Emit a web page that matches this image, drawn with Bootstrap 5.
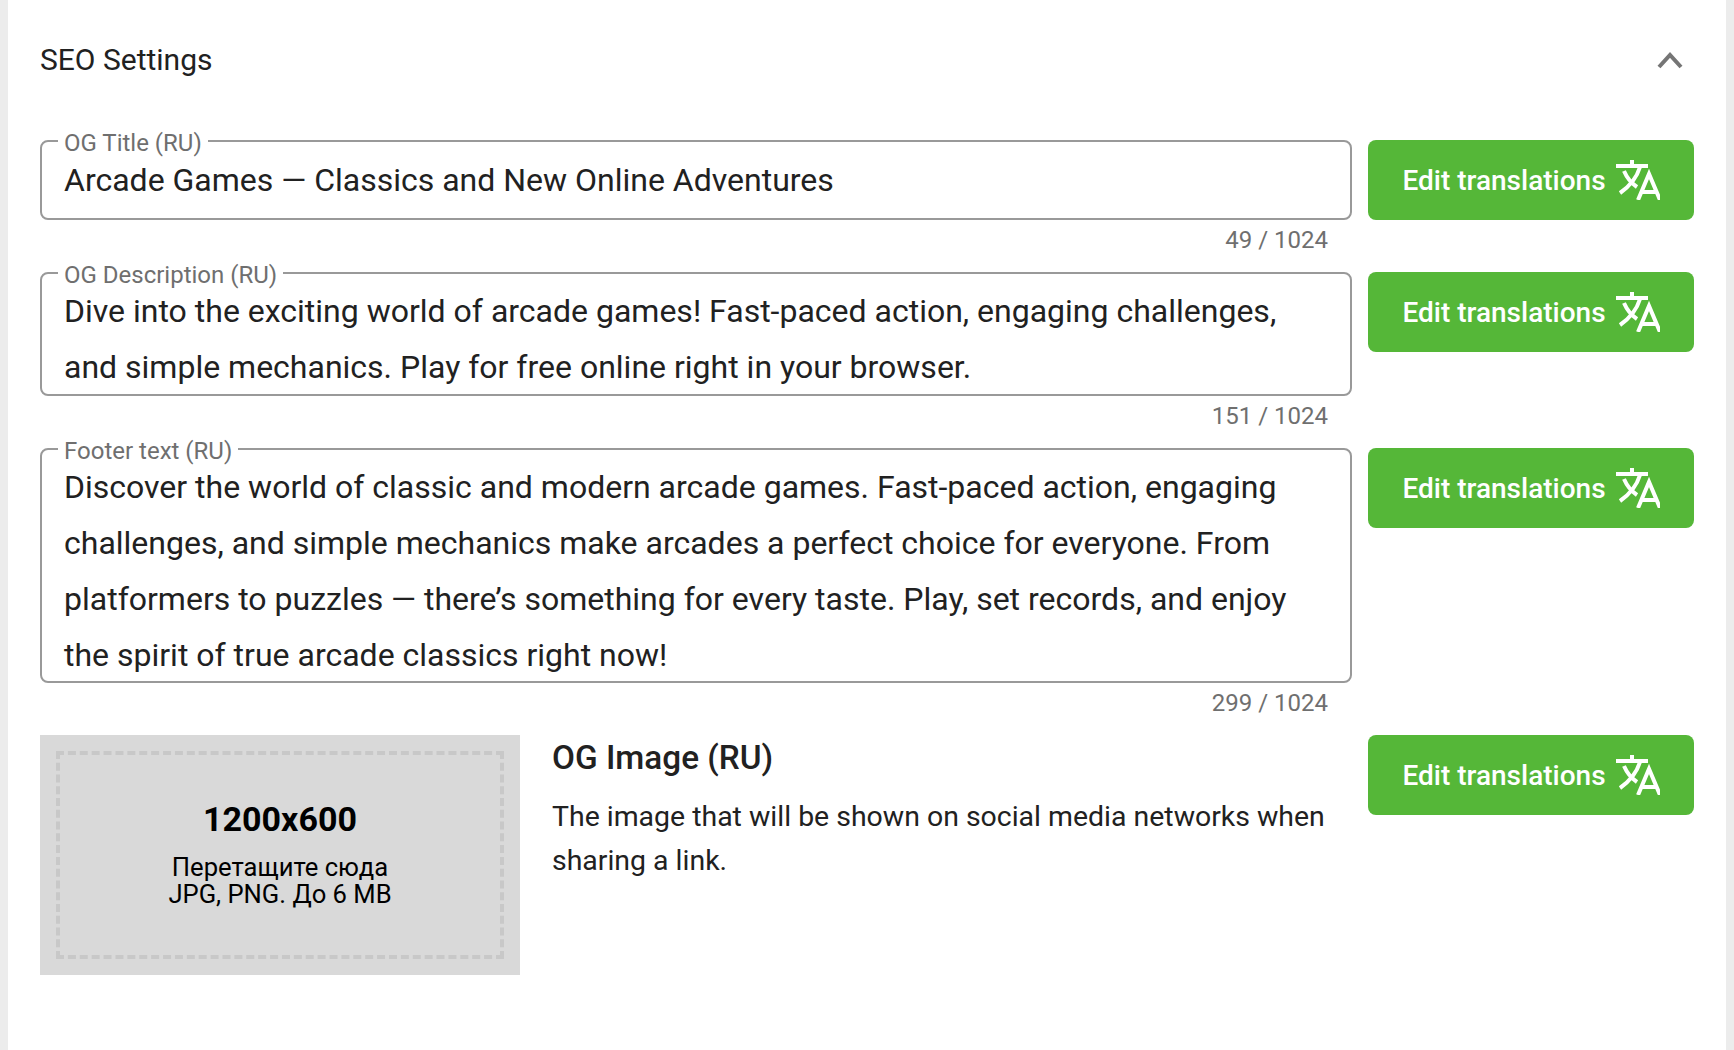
<!DOCTYPE html>
<html lang="en">
<head>
<meta charset="utf-8">
<title>SEO Settings</title>
<link href="https://cdn.jsdelivr.net/npm/bootstrap@5.3.0/dist/css/bootstrap.min.css" rel="stylesheet">
<style>
html,body{height:100%}
body{background:#ececec;font-family:Roboto,"Liberation Sans",sans-serif;color:#212121;overflow:hidden}
.seo-panel{margin:0 8px;background:#fff;height:1050px;padding:0 32px}
.seo-head{height:120px;margin-bottom:20px}
.seo-head h2{font-size:30px;font-weight:400;margin:0;color:#212121}
.seo-chev{width:28px;height:20px;margin-right:10px}
.seo-row{column-gap:16px}
.seo-main{flex:1 1 auto;min-width:0}
.seo-fs{border:2px solid #999;border-radius:8px;margin:0;padding:0 22px;min-width:0;display:block}
.seo-fs legend{float:none;width:auto;font-size:24px;line-height:4px;height:0;margin:0 0 0 -6px;padding:0 6px;color:#6f6f6f}
.seo-val{font-size:32px;line-height:56px;color:#212121}
.seo-val.one{height:76px;line-height:76px}
.seo-fs.two .seo-val{padding:9px 0 0;height:120px}
.seo-fs.four .seo-val{padding:9px 0 0;height:231px}
.seo-count{height:52px;padding:4px 24px 0 0;text-align:right;font-size:24px;line-height:32px;color:#6f6f6f}
.seo-btn{flex:0 0 326px;width:326px;height:80px;background:#55b738;border:0;border-radius:8px;color:#fff;font-size:28px;font-weight:500;padding:2px 0 0;column-gap:10px}
.seo-btn:hover{background:#55b738;color:#fff}
.seo-btn svg{width:44px;height:40px;flex:none;margin-top:-2px}
.seo-drop{flex:0 0 480px;width:480px;height:240px;background:#d9d9d9;padding:16px;color:#000}
.seo-dash{height:100%;border:4px dashed #c8c8c8;text-align:center;padding-bottom:3px}
.seo-size{font-size:34px;font-weight:700;line-height:40px;margin-bottom:15px}
.seo-hint{font-size:25.6px;line-height:27px}
.seo-info{padding-left:32px}
.seo-info h3{font-size:33.3px;font-weight:500;line-height:40px;margin:0 0 17px;padding-top:3px;color:#212121}
.seo-info p{font-size:28.45px;line-height:44px;margin:0;color:#212121}
</style>
</head>
<body>
<div class="seo-panel">
  <div class="seo-head d-flex align-items-center justify-content-between">
    <h2>SEO Settings</h2>
    <svg class="seo-chev" viewBox="0 0 28 20" fill="none" stroke="#757575" stroke-width="4"><path d="M3 17 14 5 25 17"/></svg>
  </div>

  <div class="seo-row d-flex align-items-start">
    <div class="seo-main">
      <fieldset class="seo-fs"><legend>OG Title (RU)</legend><div class="seo-val one">Arcade Games — Classics and New Online Adventures</div></fieldset>
      <div class="seo-count">49 / 1024</div>
    </div>
    <button type="button" class="btn seo-btn d-flex align-items-center justify-content-center">Edit translations
      <svg viewBox="0 0 44 40" fill="none" stroke="#fff" stroke-width="4"><path d="M0 6H32M16 0V6M24 7C21 17 14 26 4 33M8 11C11 18 15 23 21 27"/><path stroke-width="4" d="M22 40 33 14 44 40M26 32H40"/></svg>
    </button>
  </div>

  <div class="seo-row d-flex align-items-start">
    <div class="seo-main">
      <fieldset class="seo-fs two"><legend>OG Description (RU)</legend><div class="seo-val">Dive into the exciting world of arcade games! Fast-paced action, engaging challenges, and simple mechanics. Play for free online right in your browser.</div></fieldset>
      <div class="seo-count">151 / 1024</div>
    </div>
    <button type="button" class="btn seo-btn d-flex align-items-center justify-content-center">Edit translations
      <svg viewBox="0 0 44 40" fill="none" stroke="#fff" stroke-width="4"><path d="M0 6H32M16 0V6M24 7C21 17 14 26 4 33M8 11C11 18 15 23 21 27"/><path stroke-width="4" d="M22 40 33 14 44 40M26 32H40"/></svg>
    </button>
  </div>

  <div class="seo-row d-flex align-items-start">
    <div class="seo-main">
      <fieldset class="seo-fs four"><legend>Footer text (RU)</legend><div class="seo-val">Discover the world of classic and modern arcade games. Fast-paced action, engaging challenges, and simple mechanics make arcades a perfect choice for everyone. From platformers to puzzles — there’s something for every taste. Play, set records, and enjoy the spirit of true arcade classics right now!</div></fieldset>
      <div class="seo-count">299 / 1024</div>
    </div>
    <button type="button" class="btn seo-btn d-flex align-items-center justify-content-center">Edit translations
      <svg viewBox="0 0 44 40" fill="none" stroke="#fff" stroke-width="4"><path d="M0 6H32M16 0V6M24 7C21 17 14 26 4 33M8 11C11 18 15 23 21 27"/><path stroke-width="4" d="M22 40 33 14 44 40M26 32H40"/></svg>
    </button>
  </div>

  <div class="seo-row d-flex align-items-start">
    <div class="seo-main d-flex">
      <div class="seo-drop">
        <div class="seo-dash d-flex flex-column justify-content-center">
          <div class="seo-size">1200x600</div>
          <div class="seo-hint">Перетащите сюда<br>JPG, PNG. До 6 MB</div>
        </div>
      </div>
      <div class="seo-info">
        <h3>OG Image (RU)</h3>
        <p>The image that will be shown on social media networks when sharing a link.</p>
      </div>
    </div>
    <button type="button" class="btn seo-btn d-flex align-items-center justify-content-center">Edit translations
      <svg viewBox="0 0 44 40" fill="none" stroke="#fff" stroke-width="4"><path d="M0 6H32M16 0V6M24 7C21 17 14 26 4 33M8 11C11 18 15 23 21 27"/><path stroke-width="4" d="M22 40 33 14 44 40M26 32H40"/></svg>
    </button>
  </div>
</div>
<script src="https://cdn.jsdelivr.net/npm/bootstrap@5.3.0/dist/js/bootstrap.bundle.min.js"></script>
</body>
</html>
